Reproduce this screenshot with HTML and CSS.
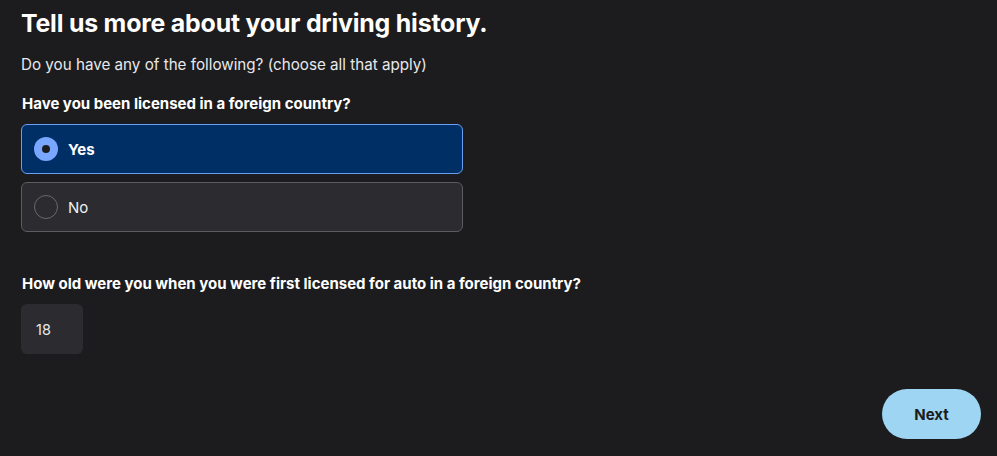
FILE: index.html
```html
<!DOCTYPE html>
<html>
<head>
<meta charset="utf-8">
<link rel="stylesheet" href="styles.css">
</head>
<body>
<main class="page">
  <h1 class="title">Tell us more about your driving history.</h1>
  <p class="subtitle">Do you have any of the following? (choose all that apply)</p>
  <div class="question">
    <div class="label">Have you been licensed in a foreign country?</div>
    <div class="options">
      <div class="option selected"><span class="radio"><span class="dot"></span></span><span class="opt-text">Yes</span></div>
      <div class="option"><span class="radio"></span><span class="opt-text">No</span></div>
    </div>
  </div>
  <div class="question q2">
    <div class="label">How old were you when you were first licensed for auto in a foreign country?</div>
    <div class="input">18</div>
  </div>
  <div class="footer">
    <button class="next">Next</button>
  </div>
</main>
</body>
</html>
```
FILE: styles.css
```css
html, body {
  margin: 0;
  padding: 0;
  background: #1c1c1e;
  color: #ffffff;
  font-family: Inter, "Open Sans", sans-serif;
}
.page {
  padding: 7px 16px 0 21px;
  display: flex;
  flex-direction: column;
}
.title {
  margin: 0;
  font-size: 24.9px;
  font-weight: 700;
  line-height: 32px;
  letter-spacing: -0.2px;
}
.subtitle {
  margin: 16px 0 0 0;
  font-size: 15.2px;
  line-height: 20px;
  color: #e8e8ea;
}
.question {
  margin-top: 19px;
}
.label {
  font-size: 15px;
  font-weight: 700;
  line-height: 20px;
  padding-left: 1px;
}
.options {
  margin-top: 10px;
  display: flex;
  flex-direction: column;
  gap: 8px;
  width: 442px;
}
.option {
  box-sizing: border-box;
  height: 50px;
  border: 1px solid #5c5c60;
  background: #2c2c30;
  border-radius: 6px;
  display: flex;
  align-items: center;
  padding-left: 12px;
  gap: 10px;
}
.option.selected {
  background: #002f66;
  border-color: #6a9ef2;
}
.radio {
  box-sizing: border-box;
  width: 24px;
  height: 24px;
  border-radius: 50%;
  border: 1px solid #6a6a6e;
  display: flex;
  align-items: center;
  justify-content: center;
}
.selected .radio {
  border: none;
  background: #79a6ff;
}
.dot {
  width: 8px;
  height: 8px;
  border-radius: 50%;
  background: #1c1c1e;
}
.opt-text {
  font-size: 15px;
  color: #f0f0f2;
}
.selected .opt-text {
  font-weight: 700;
  color: #fff;
}
.q2 {
  margin-top: 42px;
}
.input {
  box-sizing: border-box;
  margin-top: 10px;
  width: 62px;
  height: 50px;
  border-radius: 6px;
  background: #2c2c30;
  display: flex;
  align-items: center;
  padding-left: 15px;
  font-size: 14.5px;
  color: #e8e8ea;
}
.footer {
  display: flex;
  justify-content: flex-end;
  margin-top: 35px;
}
.next {
  width: 99px;
  height: 50px;
  border: none;
  border-radius: 25px;
  background: #9dd5f3;
  color: #1c1c1e;
  font-family: Inter, "Open Sans", sans-serif;
  font-size: 15px;
  font-weight: 700;
}
```
